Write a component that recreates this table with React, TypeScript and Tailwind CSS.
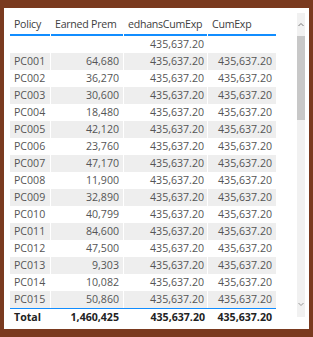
import React from "react";

const rows: [string, string][] = [
  ["PC001", "64,680"],
  ["PC002", "36,270"],
  ["PC003", "30,600"],
  ["PC004", "18,480"],
  ["PC005", "42,120"],
  ["PC006", "23,760"],
  ["PC007", "47,170"],
  ["PC008", "11,900"],
  ["PC009", "32,890"],
  ["PC010", "40,799"],
  ["PC011", "84,600"],
  ["PC012", "47,500"],
  ["PC013", "9,303"],
  ["PC014", "10,082"],
  ["PC015", "50,860"],
];

const cols = "grid grid-cols-[40px_72px_83px_68px] gap-x-[1px]";

const App = () => {
  return (
    <div className="w-[313px] h-[337px] bg-[#7a3a1f] pt-[8px] px-[4px] pb-[8px] font-['Open_Sans',sans-serif] text-[10.6px]">
      <div className="bg-white h-[321px] flex items-start">
        {/* Table */}
        <div className="ml-[6px] mt-[2px] w-[266px]">
          <div className={`${cols} text-[#404040] tracking-[-0.25px]`}>
            {["Policy", "Earned Prem", "edhansCumExp", "CumExp"].map((h) => (
              <div
                key={h}
                className="pt-[6px] pb-[1px] pl-[4px] leading-[17px] border-b-2 border-[#118dff] whitespace-nowrap overflow-hidden"
              >
                {h}
              </div>
            ))}
          </div>

          <div className={`${cols} text-[#555] leading-[17px] h-[17px]`}>
            <div />
            <div />
            <div className="text-right pr-[3px]">435,637.20</div>
            <div />
          </div>

          {rows.map(([p, e], i) => {
            const bg = i % 2 === 0 ? "bg-[#eeeeee]" : "bg-white";
            return (
              <div key={p} className={`${cols} text-[#555] leading-[17px] h-[17px]`}>
                <div className={`${bg} pl-[4px]`}>{p}</div>
                <div className={`${bg} text-right pr-[4px]`}>{e}</div>
                <div className={`${bg} text-right pr-[3px]`}>435,637.20</div>
                <div className={`${bg} text-right pr-[4px]`}>435,637.20</div>
              </div>
            );
          })}

          <div className={`${cols} font-bold text-[#222] leading-[17px] border-t border-[#118dff]`}>
            <div className="pl-[4px]">Total</div>
            <div className="text-right pr-[4px]">1,460,425</div>
            <div className="text-right pr-[2px] whitespace-nowrap">435,637.20</div>
            <div className="text-right pr-[4px]">435,637.20</div>
          </div>
        </div>

        {/* Scrollbar */}
        <div className="ml-auto mr-[4px] mt-[5px] w-[8px] h-[304px] bg-[#f1f1f1] flex flex-col items-center">
          <svg width="8" height="20" viewBox="0 0 8 20" className="shrink-0">
            <polyline points="1.5,13 4,10.5 6.5,13" fill="none" stroke="#777" strokeWidth="1" />
          </svg>
          <div className="w-[8px] h-[84px] bg-[#c8c8c8] mt-[3px]" />
          <div className="flex-1" />
          <svg width="8" height="20" viewBox="0 0 8 20" className="shrink-0">
            <polyline points="1.5,6 4,8.5 6.5,6" fill="none" stroke="#999" strokeWidth="1" />
          </svg>
        </div>
      </div>
    </div>
  );
};

export default App;
